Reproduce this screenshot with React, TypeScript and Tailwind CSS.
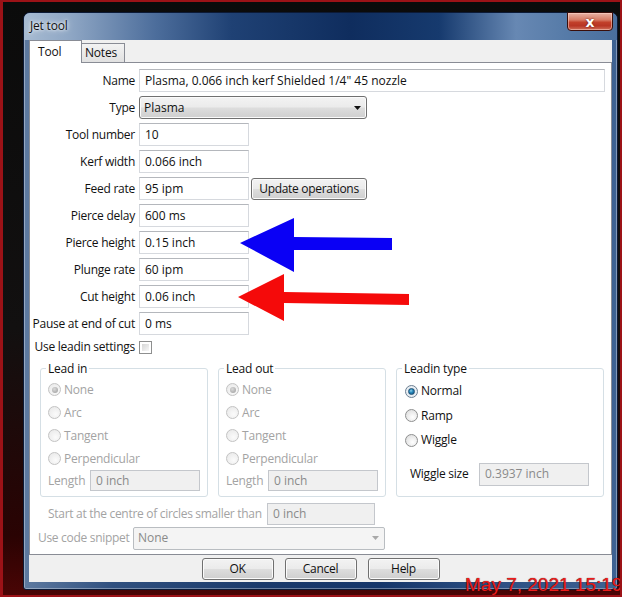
import React from "react";

const UI = { fontFamily: '"Open Sans", "Noto Sans", "DejaVu Sans", sans-serif' };

function TextBox({ value, className, disabled }: { value: string; className: string; disabled?: boolean }) {
  return (
    <div
      className={
        "flex items-center border pl-[5px] text-[12px] leading-none whitespace-nowrap overflow-hidden " +
        (disabled
          ? "bg-[#f0f0f0] border-[#c4c7cc] text-[#8a8a8a] "
          : "bg-white border-[#d6d9de] border-t-[#b4b7bc] text-[#111] ") +
        className
      }
    >
      {value}
    </div>
  );
}

function Radio({ checked, disabled }: { checked?: boolean; disabled?: boolean }) {
  if (!disabled && checked) {
    return (
      <div className="w-[13px] h-[13px] rounded-full border border-[#6d7f92] bg-[#e8eef3] flex items-center justify-center shrink-0">
        <div className="w-[7px] h-[7px] rounded-full bg-[radial-gradient(circle_at_40%_35%,#8fd0ea_0%,#2a8bbd_40%,#0c4a78_100%)] border border-[#1d4f74]" />
      </div>
    );
  }
  return (
    <div
      className={
        "w-[13px] h-[13px] rounded-full border flex items-center justify-center shrink-0 " +
        (disabled
          ? "border-[#c3c3c3] bg-[radial-gradient(circle_at_60%_65%,#fbfbfb_0%,#e6e6e6_100%)]"
          : "border-[#8e8f8f] bg-[radial-gradient(circle_at_60%_65%,#ffffff_0%,#d8d8d8_100%)]")
      }
    >
      {checked && <div className="w-[6px] h-[6px] rounded-full bg-[radial-gradient(circle_at_40%_35%,#dadada_0%,#9a9a9a_100%)]" />}
    </div>
  );
}

function RadioRow({ label, checked, disabled, h }: { label: string; checked?: boolean; disabled?: boolean; h: string }) {
  return (
    <div className={"flex items-center gap-[3px] " + h}>
      <Radio checked={checked} disabled={disabled} />
      <span className={"text-[12px] tracking-[-0.2px] " + (disabled ? "text-[#a3a3a3]" : "text-[#111]")}>{label}</span>
    </div>
  );
}

function Button({ label, className }: { label: string; className: string }) {
  return (
    <div
      className={
        "flex items-center justify-center rounded-[3px] border border-[#707070] text-[12px] tracking-[-0.3px] text-[#111] shadow-[inset_0_0_0_1px_#fbfbfb] bg-[linear-gradient(#f3f3f3_0%,#ebebeb_48%,#dddddd_52%,#cfcfcf_100%)] " +
        className
      }
    >
      {label}
    </div>
  );
}

function Label({ children }: { children: React.ReactNode }) {
  return <div className="flex justify-end whitespace-nowrap tracking-[-0.25px]">{children}</div>;
}

function LeadGroup({ title }: { title: string }) {
  return (
    <fieldset className="w-[168px] border border-[#d5dfe5] rounded-[3px] pl-[7px] pb-[3px]">
      <legend className="-ml-[2px] px-[2px] text-[12px] leading-[15px] tracking-[-0.2px] text-[#111]">{title}</legend>
      <div className="flex flex-col mt-[2px]">
        <RadioRow label="None" checked disabled h="h-[23px]" />
        <RadioRow label="Arc" disabled h="h-[23px]" />
        <RadioRow label="Tangent" disabled h="h-[23px]" />
        <RadioRow label="Perpendicular" disabled h="h-[23px]" />
        <div className="flex items-center h-[21px]">
          <span className="w-[42px] text-[12px] tracking-[-0.2px] text-[#a3a3a3]">Length</span>
          <TextBox value="0 inch" disabled className="w-[110px] h-[21px]" />
        </div>
      </div>
    </fieldset>
  );
}

const rows: [string, string][] = [
  ["Tool number", "10"],
  ["Kerf width", "0.066 inch"],
];

const rows2: [string, string][] = [
  ["Pierce delay", "600 ms"],
  ["Pierce height", "0.15 inch"],
  ["Plunge rate", "60 ipm"],
  ["Cut height", "0.06 inch"],
  ["Pause at end of cut", "0 ms"],
];

export default function App() {
  return (
    <div
      style={UI}
      className="relative w-[622px] h-[597px] overflow-hidden whitespace-nowrap border-t-[2px] border-l-[3px] border-r-[2px] border-b-[2px] border-[#9c1217] bg-[linear-gradient(180deg,#0b0b0b_0%,#121010_55%,#2a0303_90%,#4a0505_100%)]"
    >
      {/* window */}
      <div className="ml-[20px] mt-[10px] w-[595px] h-[578px] rounded-t-[7px] rounded-b-[3px] border border-[#0c1a36] bg-[linear-gradient(90deg,#5e7aa0_0%,#30507f_15%,#1b3a6b_40%,#16366a_60%,#2c4f83_80%,#3f6393_100%)] flex flex-col shadow-[inset_0_0_0_1px_rgba(255,255,255,0.35)]">
        {/* title bar */}
        <div className="h-[27px] flex items-start justify-between bg-[linear-gradient(90deg,#a7bbd2_0%,#8ea6c4_8%,#4d6e9c_22%,#1f4174_35%,#0f2d5e_55%,#163a6e_70%,#6788b3_83%,#557aa7_92%,#4a6f9e_100%)] rounded-t-[6px]">
          <span className="pl-[6px] pt-[6px] text-[12px] leading-[14px] tracking-[-0.2px] text-[#111] [text-shadow:0_0_6px_#fff,0_0_3px_#fff]">Jet tool</span>
          <div className="-mt-[1px] mr-[4px] w-[46px] h-[19px] rounded-b-[4px] border border-[#3a0e0a] bg-[linear-gradient(180deg,#e9b3a5_0%,#d77c66_40%,#c2402a_55%,#b83524_75%,#d0705a_100%)] shadow-[inset_0_0_0_1px_rgba(255,220,210,0.5)] flex items-center justify-center">
            <span className="text-white text-[14px] font-bold leading-none [text-shadow:0_0_2px_#5a1408]" style={{ fontFamily: '"DejaVu Sans", sans-serif' }}>x</span>
          </div>
        </div>

        {/* client area */}
        <div className="mx-[5px] w-[583px] h-[542px] bg-[#f0f0f0] flex flex-col">
          {/* tabs */}
          <div className="h-[22px] flex items-end">
            <div className="relative z-10 -mb-px w-[53px] h-[23px] bg-white border border-b-0 border-[#898c95] pl-[8px] flex items-center text-[12px] tracking-[-0.2px] text-[#111]">
              Tool
            </div>
            <div className="w-[43px] h-[19px] border-t border-r border-[#898c95] bg-[linear-gradient(#f3f3f3,#e1e1e1)] pl-[3px] flex items-center text-[12px] tracking-[-0.2px] text-[#111]">
              Notes
            </div>
          </div>

          {/* panel */}
          <div className="h-[493px] border border-[#898c95] bg-white flex flex-col">
            <div className="pt-[6px] grid grid-cols-[105px_1fr] gap-x-[4px] gap-y-[4px] items-center text-[12px] text-[#111]">
              <Label>Name</Label>
              <TextBox value={'Plasma, 0.066 inch kerf Shielded 1/4" 45 nozzle'} className="w-[466px] h-[23px]" />

              <Label>Type</Label>
              <div className="w-[228px] h-[23px] rounded-[3px] border border-[#707070] shadow-[inset_0_0_0_1px_#fbfbfb] bg-[linear-gradient(#f3f3f3_0%,#ebebeb_48%,#dddddd_52%,#cfcfcf_100%)] flex items-center justify-between pl-[4px] pr-[5px]">
                <span>Plasma</span>
                <svg width="7" height="4" viewBox="0 0 7 4"><path d="M0 0H7L3.5 4Z" fill="#111" /></svg>
              </div>

              {rows.map(([l, v]) => (
                <React.Fragment key={l}>
                  <Label>{l}</Label>
                  <TextBox value={v} className="w-[110px] h-[23px]" />
                </React.Fragment>
              ))}

              <Label>Feed rate</Label>
              <div className="flex items-center gap-[2px]">
                <TextBox value="95 ipm" className="w-[110px] h-[23px]" />
                <Button label="Update operations" className="w-[116px] h-[22px]" />
              </div>

              {rows2.map(([l, v]) => (
                <React.Fragment key={l}>
                  <Label>{l}</Label>
                  <TextBox value={v} className="w-[110px] h-[23px]" />
                </React.Fragment>
              ))}

              <div className="flex justify-end h-[16px] leading-[16px] tracking-[-0.25px]">Use leadin settings</div>
              <div className="w-[13px] h-[13px] border border-[#8e8f8f] bg-white p-[2px]">
                <div className="w-full h-full bg-[linear-gradient(135deg,#d6d6d6,#f7f7f7)]" />
              </div>
            </div>

            {/* groups */}
            <div className="mt-[6px] pl-[10px] flex gap-[10px]">
              <LeadGroup title="Lead in" />
              <LeadGroup title="Lead out" />
              <fieldset className="w-[208px] border border-[#d5dfe5] rounded-[3px] pl-[8px] pb-[10px]">
                <legend className="-ml-[3px] px-[2px] text-[12px] leading-[15px] tracking-[-0.2px] text-[#111]">Leadin type</legend>
                <div className="flex flex-col mt-[3px]">
                  <RadioRow label="Normal" checked h="h-[24.5px]" />
                  <RadioRow label="Ramp" h="h-[24.5px]" />
                  <RadioRow label="Wiggle" h="h-[24.5px]" />
                  <div className="mt-[10px] pl-[5px] flex items-center h-[23px]">
                    <span className="w-[69px] text-[12px] tracking-[-0.25px] text-[#111]">Wiggle size</span>
                    <TextBox value="0.3937 inch" disabled className="w-[110px] h-[23px]" />
                  </div>
                </div>
              </fieldset>
            </div>

            <div className="mt-[6px] pl-[18px] flex items-center h-[22px]">
              <span className="w-[219px] text-[12px] text-[#a3a3a3] tracking-[-0.3px]">Start at the centre of circles smaller than</span>
              <TextBox value="0 inch" disabled className="w-[108px] h-[22px]" />
            </div>

            <div className="mt-[2px] pl-[8px] flex items-center h-[23px]">
              <span className="w-[95px] text-[12px] text-[#a3a3a3] tracking-[-0.3px]">Use code snippet</span>
              <div className="w-[252px] h-[23px] rounded-[2px] border border-[#b9bdc1] bg-[#f4f4f4] flex items-center justify-between pl-[4px] pr-[5px] text-[12px] text-[#8a8a8a]">
                <span>None</span>
                <svg width="7" height="4" viewBox="0 0 7 4"><path d="M0 0H7L3.5 4Z" fill="#a8a8a8" /></svg>
              </div>
            </div>
          </div>

          {/* buttons */}
          <div className="pt-[3px] flex justify-center gap-[11px]">
            <Button label="OK" className="w-[72px] h-[22px]" />
            <Button label="Cancel" className="w-[72px] h-[22px]" />
            <Button label="Help" className="w-[72px] h-[22px]" />
          </div>
        </div>
      </div>

      {/* annotation arrows */}
      <svg className="absolute left-[-3px] top-[-2px] pointer-events-none" width="622" height="597" viewBox="0 0 622 597">
        <polygon points="240,243 294,218 294,237 392,238 392,250 294,250 294,272" fill="#0a00f5" />
        <polygon points="238,297 284,274 284,292 409,294 409,305 284,303 284,321" fill="#f50a0a" />
      </svg>

      {/* timestamp */}
      <div
        className="absolute left-[462px] top-[572px] whitespace-nowrap text-[19px] leading-[22px] text-[#ec1b1b] [text-shadow:0_0_1px_#3a0000]"
        style={{ fontFamily: '"Liberation Sans", Arial, sans-serif' }}
      >
        May 7, 2021 15:19
      </div>
    </div>
  );
}
